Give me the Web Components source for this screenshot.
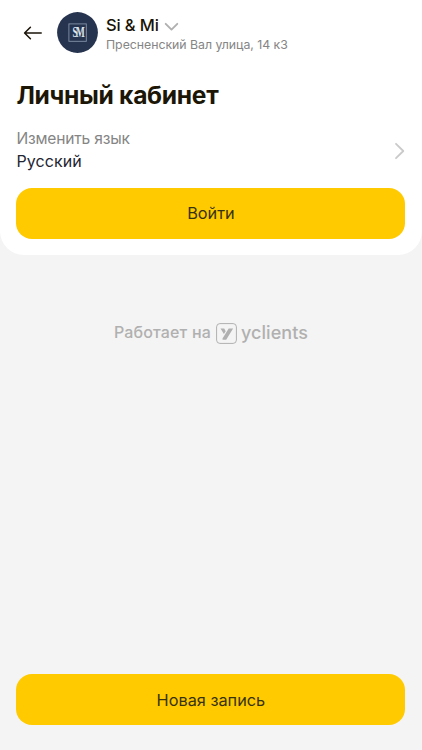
<!DOCTYPE html>
<html lang="ru">
<head>
<meta charset="utf-8">
<title>Личный кабинет</title>
<style>
html,body{margin:0;height:100%}
body{background:#f4f4f4;font-family:Inter,"Liberation Sans",sans-serif;-webkit-font-smoothing:antialiased}
</style>
</head>
<body>
<account-page></account-page>
<script>
const define = (name, html) => customElements.define(name, class extends HTMLElement {
  constructor() {
    super();
    this.attachShadow({mode: 'open'}).innerHTML = html;
  }
});

define('salon-logo', `
<style>:host{display:block;width:41px;height:41px;flex:none}svg{display:block}</style>
<svg width="41" height="41" viewBox="0 0 41 41">
  <circle cx="20.5" cy="20.5" r="20.4" fill="#27344f"/>
  <rect x="11.9" y="11.9" width="17.4" height="17.4" fill="none" stroke="#8492a8" stroke-width=".9"/>
  <text x="15.4" y="25.2" font-family="Liberation Serif,serif" font-weight="700" font-size="14.5" fill="#dce5ef" textLength="10.6" lengthAdjust="spacingAndGlyphs" letter-spacing="-2.6">SM</text>
</svg>`);

define('salon-header', `
<style>
:host{display:flex;align-items:center;height:65px;padding-left:23px;box-sizing:border-box}
.back{display:block;width:20px;height:16px;margin-right:14px}
.info{margin-left:8px;padding-top:3px}
.name{display:flex;align-items:center;gap:5px;height:20px;font-size:16.5px;line-height:20px;font-weight:500;color:#171202;letter-spacing:-.12px}
.name svg{display:block;margin-top:3px}
.address{margin-top:1px;font-size:12.3px;line-height:17px;color:#858585;white-space:nowrap;letter-spacing:-.02px}
</style>
<svg class="back" viewBox="0 0 20 16"><path d="M18.2 8H1.8M7.4 2.2 1.6 8l5.8 5.8" fill="none" stroke="#1b1408" stroke-width="1.55" stroke-linecap="round" stroke-linejoin="round"/></svg>
<salon-logo></salon-logo>
<div class="info">
  <div class="name"><span><slot name="name"></slot></span>
    <svg width="15" height="10" viewBox="0 0 15 10"><path d="M1.7 1.8 7.5 7.6l5.8-5.8" fill="none" stroke="#b0b0b0" stroke-width="1.9" stroke-linecap="round" stroke-linejoin="round"/></svg></div>
  <div class="address"><slot name="address"></slot></div>
</div>`);

define('language-row', `
<style>
:host{display:flex;align-items:center;justify-content:space-between;height:46px}
.label,.value{font-size:16px;line-height:23px}
.label{color:#858585;font-size:15.6px;letter-spacing:-.2px}.value{color:#232531;letter-spacing:.1px}
svg{display:block;margin:2px -.5px 0 0}
</style>
<div><div class="label"><slot name="label"></slot></div><div class="value"><slot></slot></div></div>
<svg width="12" height="18" viewBox="0 0 12 18"><path d="M2 1.8 9.3 9 2 16.2" fill="none" stroke="#cacaca" stroke-width="1.8" stroke-linecap="round" stroke-linejoin="round"/></svg>`);

define('primary-button', `
<style>
:host{display:block}
button{display:block;width:100%;height:51px;padding:0;border:0;border-radius:16px;background:#ffca00;color:#37320f;font:400 16.3px/51px Inter,"Liberation Sans",sans-serif;text-align:center}
:host(.footer) button{padding-top:1px;line-height:50px}
</style>
<button><slot></slot></button>`);

define('powered-by', `
<style>
:host{display:flex;align-items:center;justify-content:center;height:24px;color:#b0b0b0}
.text{font-size:16px;line-height:23px;height:24px;font-weight:500;letter-spacing:.16px}
svg{display:block;margin:1px 4px 0 5px}
.brand{font-size:18px;line-height:24px;height:24px;font-weight:500;letter-spacing:.08px}
</style>
<span class="text"><slot></slot></span>
<svg width="21" height="21" viewBox="0 0 21 21"><rect x=".6" y=".6" width="19.8" height="19.8" rx="3.3" fill="none" stroke="#b0b0b0"/><path d="M4.5 5.6h3.7l1.5 2.6-1.8 2.8zM12.7 5.6h4.4L10.2 16.8H6.6l-.1-1.3z" fill="#b0b0b0"/></svg>
<span class="brand"><slot name="brand"></slot></span>`);

define('account-page', `
<style>
:host{display:flex;flex-direction:column;height:100vh;min-height:750px;box-sizing:border-box;padding-bottom:25px}
.card{height:255px;background:#fff;border-radius:0 0 24px 24px}
.body{padding:0 16.6px 0 16.4px}
h1{margin:0;padding:15px 0 16px;font-size:24.6px;line-height:31px;font-weight:700;color:#1b1605;letter-spacing:-.3px}
language-row{margin-bottom:15px}
powered-by{margin-top:66px}
.footer{margin:auto 16.6px 0 16.4px}
</style>
<div class="card">
  <salon-header><span slot="name">Si &amp; Mi</span><span slot="address">Пресненский Вал улица, 14 к3</span></salon-header>
  <div class="body">
    <h1>Личный кабинет</h1>
    <language-row><span slot="label">Изменить язык</span>Русский</language-row>
    <primary-button>Войти</primary-button>
  </div>
</div>
<powered-by>Работает на<span slot="brand">yclients</span></powered-by>
<primary-button class="footer">Новая запись</primary-button>`);
</script>
</body>
</html>
